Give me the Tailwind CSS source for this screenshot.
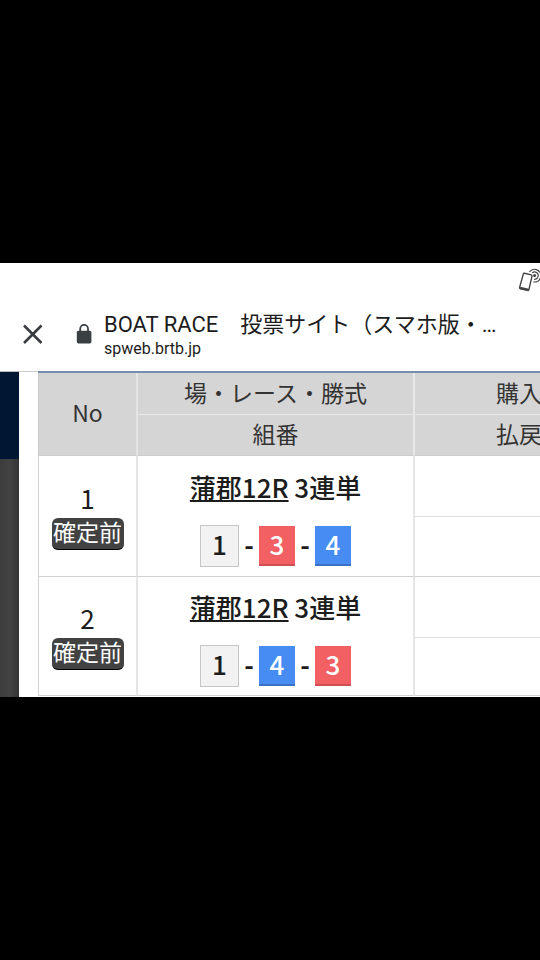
<!DOCTYPE html>
<html lang="ja">
<head>
<meta charset="utf-8">
<meta name="viewport" content="width=device-width, initial-scale=1">
<title>BOAT RACE 投票サイト</title>
<script src="https://cdn.jsdelivr.net/npm/@tailwindcss/browser@4"></script>
</head>
<body class="flex min-h-screen flex-col justify-center overflow-x-hidden bg-black font-['Noto_Sans_CJK_JP',sans-serif] text-[#1c1c1c]">
<div class="w-full overflow-hidden bg-white">
  <header class="flex h-[108px] flex-col">
    <div class="flex h-9 shrink-0 justify-end overflow-hidden pt-1">
      <svg class="-mr-[3px] h-[26px] w-[26px] shrink-0" viewBox="0 0 26 26" fill="none" stroke="#444" stroke-width="1.4" aria-hidden="true">
        <path d="M7.6 6.3 L14.2 7.9 Q15.2 8.2 15 9.1 L11.9 22.6 Q11.6 23.7 10.5 23.4 L3.4 21.7 Q2.3 21.4 2.6 20.4 L6.3 7.1 Q6.6 6.1 7.6 6.3Z"/>
        <path d="M3 20.8 L11.6 22.9" stroke-width="2.4"/>
        <circle cx="17.6" cy="8.6" r="1.5" fill="#444" stroke="none"/>
        <path d="M15.2 5.8 A3.7 3.7 0 1 1 17.2 12.3" stroke-width="1.2"/>
        <path d="M12.4 5 A6.3 6.3 0 1 1 16.4 14.9" stroke-width="1.2"/>
      </svg>
    </div>
    <div class="flex items-center pt-[10px]">
      <button type="button" aria-label="閉じる" class="ml-[22px] flex size-[22px] shrink-0 items-center justify-center">
        <svg class="size-[22px]" viewBox="0 0 22 22" fill="none" stroke="#373b3f" stroke-width="2.5" aria-hidden="true"><path d="M2 2.5 L19.5 20 M19.5 2.5 L2 20"/></svg>
      </button>
      <svg class="ml-8 h-5 w-4 shrink-0" viewBox="0 0 16 20" aria-hidden="true">
        <path d="M4.2 8 V4.8 a3.9 3.9 0 0 1 7.8 0 V8" fill="none" stroke="#3a3f42" stroke-width="1.8"/>
        <rect x="0.8" y="6.8" width="14.6" height="12.6" rx="1.6" fill="#3a3f42"/>
      </svg>
      <div class="ml-3 flex min-w-0 flex-col pt-px font-[Roboto,'Noto_Sans_CJK_JP',sans-serif]">
        <h1 class="text-[22px] leading-[29px] whitespace-nowrap">BOAT RACE　投票サイト（スマホ版・…</h1>
        <p class="text-base leading-[20px]">spweb.brtb.jp</p>
      </div>
    </div>
  </header>
  <main class="flex">
    <div class="flex w-[19px] shrink-0 flex-col border-t border-[#bbb]">
      <div class="h-[87px] bg-[#001633]"></div>
      <div class="grow bg-linear-to-r from-[#3c3c3c] via-[#434343] to-[#343434]"></div>
    </div>
    <div class="min-w-0 grow border-t border-[#ccc] pl-[19px]">
      <table class="-mt-px mb-px w-full table-fixed border-separate border-spacing-0 border-t-2 border-[#748db0] text-center">
        <colgroup><col class="w-[100px]"><col class="w-[277px]"><col></colgroup>
        <thead class="bg-[#d5d5d5] text-[23px] leading-[30px] text-[#333]">
          <tr class="h-[42px]">
            <th rowspan="2" class="border-r-2 border-b border-l border-r-[#e4e4e4] border-b-[#ccc] border-l-[#ccc] p-0 pb-1 font-normal">No</th>
            <th class="border-r-2 border-b border-[#e8e8e8] p-0 pb-1 font-normal">場・レース・勝式</th>
            <th class="border-b border-[#e8e8e8] p-0 pb-1 pl-[81px] text-left font-normal whitespace-nowrap">購入</th>
          </tr>
          <tr class="h-[41px]">
            <th class="border-r-2 border-b border-r-[#e8e8e8] border-b-[#ccc] p-0 pb-1 font-normal">組番</th>
            <th class="border-b border-[#ccc] p-0 pb-1 pl-[81px] text-left font-normal whitespace-nowrap">払戻</th>
          </tr>
        </thead>
        <tbody class="text-[26px] leading-[36px]">
          <tr class="h-[61px]">
            <td rowspan="2" class="border-r-2 border-b border-l border-r-[#e6e6e6] border-b-[#d0d0d0] border-l-[#d0d0d0] p-0">
              <div class="flex flex-col items-center gap-1"><span class="leading-[32px]">1</span><span class="h-8 w-[72px] rounded-md border-b border-black bg-[#424242] text-[23px] leading-[26px] text-white">確定前</span></div>
            </td>
            <td rowspan="2" class="border-r-2 border-b border-r-[#e6e6e6] border-b-[#d0d0d0] p-0 pt-[3px] font-medium">
              <div class="flex flex-col items-center gap-5">
                <div><a href="#" class="underline decoration-2 underline-offset-2 [text-decoration-skip-ink:none]">蒲郡12R</a> 3連単</div>
                <div class="flex items-center leading-[36px]">
                  <span class="h-[42px] w-[39px] border border-[#c4c7c4] bg-[#f2f2f2]">1</span><span class="w-5 pb-1 font-bold">-</span>
                  <span class="h-10 w-9 border-b-2 border-[#cf4f54] bg-[#f26063] text-white">3</span><span class="w-5 pb-1 font-bold">-</span>
                  <span class="h-10 w-9 border-b-2 border-[#3a72c8] bg-[#478cf3] text-white">4</span>
                </div>
              </div>
            </td>
            <td class="border-b border-[#dedede] p-0"></td>
          </tr>
          <tr class="h-[60px]"><td class="border-b border-[#d0d0d0] p-0"></td></tr>
          <tr class="h-[61px]">
            <td rowspan="2" class="border-r-2 border-b border-l border-r-[#e6e6e6] border-b-[#d0d0d0] border-l-[#d0d0d0] p-0">
              <div class="flex flex-col items-center gap-1"><span class="leading-[32px]">2</span><span class="h-8 w-[72px] rounded-md border-b border-black bg-[#424242] text-[23px] leading-[26px] text-white">確定前</span></div>
            </td>
            <td rowspan="2" class="border-r-2 border-b border-r-[#e6e6e6] border-b-[#d0d0d0] p-0 pt-[3px] font-medium">
              <div class="flex flex-col items-center gap-5">
                <div><a href="#" class="underline decoration-2 underline-offset-2 [text-decoration-skip-ink:none]">蒲郡12R</a> 3連単</div>
                <div class="flex items-center leading-[36px]">
                  <span class="h-[42px] w-[39px] border border-[#c4c7c4] bg-[#f2f2f2]">1</span><span class="w-5 pb-1 font-bold">-</span>
                  <span class="h-10 w-9 border-b-2 border-[#3a72c8] bg-[#478cf3] text-white">4</span><span class="w-5 pb-1 font-bold">-</span>
                  <span class="h-10 w-9 border-b-2 border-[#cf4f54] bg-[#f26063] text-white">3</span>
                </div>
              </div>
            </td>
            <td class="border-b border-[#dedede] p-0"></td>
          </tr>
          <tr class="h-[58px]"><td class="border-b border-[#d0d0d0] p-0"></td></tr>
        </tbody>
      </table>
    </div>
  </main>
</div>
</body>
</html>
